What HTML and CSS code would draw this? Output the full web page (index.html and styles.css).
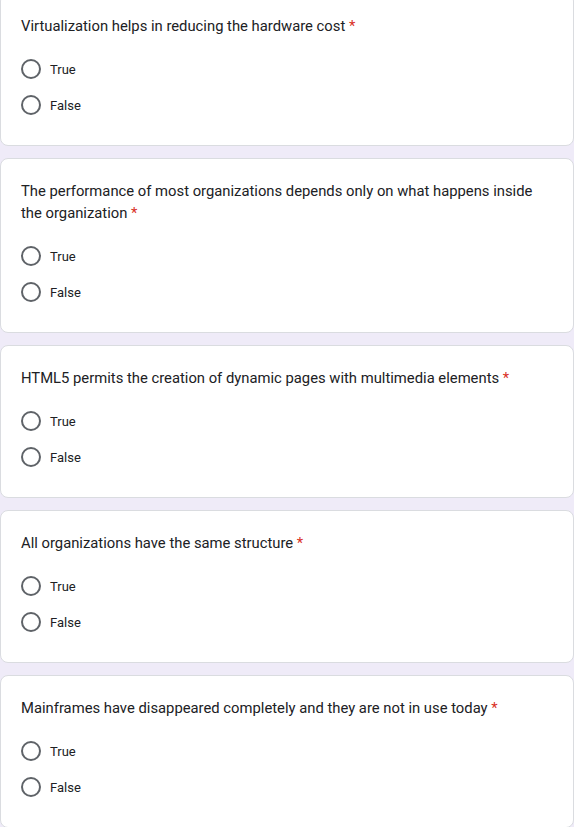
FILE: index.html
```html
<!DOCTYPE html>
<html>
<head>
<meta charset="utf-8">
<link rel="stylesheet" href="styles.css">
</head>
<body>
<div class="form">
  <div class="card">
    <div class="title">Virtualization helps in reducing the hardware cost <span class="req">*</span></div>
    <div class="options">
      <div class="opt"><span class="radio"></span><span class="label">True</span></div>
      <div class="opt"><span class="radio"></span><span class="label">False</span></div>
    </div>
  </div>
  <div class="card">
    <div class="title">The performance of most organizations depends only on what happens inside the organization <span class="req">*</span></div>
    <div class="options">
      <div class="opt"><span class="radio"></span><span class="label">True</span></div>
      <div class="opt"><span class="radio"></span><span class="label">False</span></div>
    </div>
  </div>
  <div class="card">
    <div class="title">HTML5 permits the creation of dynamic pages with multimedia elements <span class="req">*</span></div>
    <div class="options">
      <div class="opt"><span class="radio"></span><span class="label">True</span></div>
      <div class="opt"><span class="radio"></span><span class="label">False</span></div>
    </div>
  </div>
  <div class="card">
    <div class="title">All organizations have the same structure <span class="req">*</span></div>
    <div class="options">
      <div class="opt"><span class="radio"></span><span class="label">True</span></div>
      <div class="opt"><span class="radio"></span><span class="label">False</span></div>
    </div>
  </div>
  <div class="card">
    <div class="title">Mainframes have disappeared completely and they are not in use today <span class="req">*</span></div>
    <div class="options">
      <div class="opt"><span class="radio"></span><span class="label">True</span></div>
      <div class="opt"><span class="radio"></span><span class="label">False</span></div>
    </div>
  </div>
</div>
</body>
</html>
```

FILE: styles.css
```css
html, body {
  margin: 0;
  padding: 0;
  background: #efebf8;
}
body {
  font-family: Roboto, "Noto Sans", Arial, sans-serif;
  color: #202124;
}
.form {
  display: flex;
  flex-direction: column;
  gap: 12px;
  margin-top: -7px;
}
.card {
  background: #ffffff;
  border: 1px solid #dadce0;
  border-radius: 8px;
  padding: 21px 20px 22px 20px;
}
.title {
  font-size: 14.8px;
  line-height: 22px;
  color: #202124;
  padding-right: 14px;
}
.req {
  color: #d93025;
}
.options {
  margin-top: 14px;
  display: flex;
  flex-direction: column;
}
.opt {
  height: 36px;
  display: flex;
  align-items: center;
}
.radio {
  box-sizing: border-box;
  width: 20px;
  height: 20px;
  border: 2px solid #5f6368;
  border-radius: 50%;
  flex: none;
}
.label {
  margin-left: 9px;
  font-size: 13px;
  color: #202124;
}
```
